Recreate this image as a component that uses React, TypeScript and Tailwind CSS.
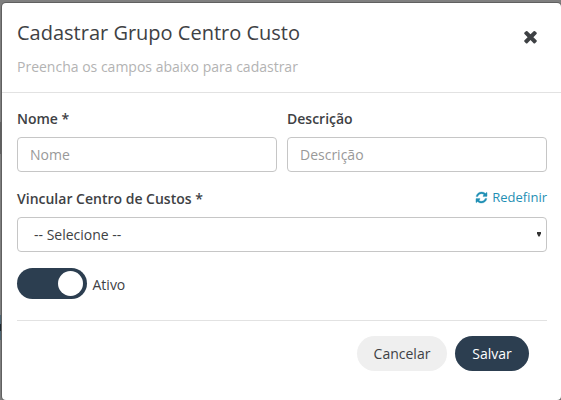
import { useState } from 'react';

const TimesIcon = () => (
  <svg viewBox="0 0 1792 1792" className="h-[19px] w-[19px]" fill="currentColor">
    <path d="M1490 1322q0 40-28 68l-136 136q-28 28-68 28t-68-28l-294-294-294 294q-28 28-68 28t-68-28l-136-136q-28-28-28-68t28-68l294-294-294-294q-28-28-28-68t28-68l136-136q28-28 68-28t68 28l294 294 294-294q28-28 68-28t68 28l136 136q28 28 28 68t-28 68l-294 294 294 294q28 28 28 68z" />
  </svg>
);

const RefreshIcon = () => (
  <svg viewBox="0 0 1792 1792" className="h-[13px] w-[13px]" fill="currentColor" stroke="currentColor" strokeWidth={40}>
    <path d="M1639 1056q0 5-1 7-64 268-268 434.5t-478 166.5q-146 0-282.5-55t-243.5-157l-129 129q-19 19-45 19t-45-19-19-45v-448q0-26 19-45t45-19h448q26 0 45 19t19 45-19 45l-137 137q71 66 161 102t187 36q134 0 250-65t186-179q11-17 53-117 8-23 30-23h192q13 0 22.5 9.5t9.5 22.5zm25-800v448q0 26-19 45t-45 19h-448q-26 0-45-19t-19-45 19-45l138-138q-148-137-349-137-134 0-250 65t-186 179q-11 17-53 117-8 23-30 23h-199q-13 0-22.5-9.5t-9.5-22.5v-7q65-268 270-434.5t480-166.5q146 0 284 55.5t245 156.5l130-129q19-19 45-19t45 19 19 45z" />
  </svg>
);

const inputClass =
  'mt-2 block h-[35px] w-full rounded border border-[#c6c6c6] bg-white px-3 text-sm text-[#3e4144] outline-none placeholder:text-[#999]';

export default function App() {
  const [ativo, setAtivo] = useState(true);

  return (
    <div className="relative h-[400px] w-[561px] overflow-hidden bg-[#7f7f7f] pt-[3px] pl-[2px] font-['Open_Sans','Noto_Sans',sans-serif] text-sm text-[#3e4144]">
      {/* Bordas da página que aparecem atrás do modal */}
      <div className="absolute top-[122px] left-0 h-8 w-[2px] bg-[#606060]" />
      <div className="absolute top-[315px] left-0 h-[25px] w-[2px] bg-[#4d6573]" />
      <div className="absolute top-[324px] left-0 h-[7px] w-px bg-[#1d2830]" />

      <div className="relative h-[397px] rounded bg-white shadow-[0_0_0_1px_#606060]">
        <header className="flex h-[90px] justify-between border-b border-[#e2e2e2] pl-[15px]">
          <div>
            <h1 className="mt-4 text-xl leading-7">Cadastrar Grupo Centro Custo</h1>
            <p className="mt-[10px] leading-5 text-[#b3b3b3]">Preencha os campos abaixo para cadastrar</p>
          </div>
          <button aria-label="Fechar" className="mt-6 mr-[21px] h-[19px]">
            <TimesIcon />
          </button>
        </header>

        <form className="pr-[14px] pl-[15px]" onSubmit={(e) => e.preventDefault()}>
          <div className="grid grid-cols-2 gap-[10px] pt-4">
            <div>
              <label className="block leading-5 font-semibold">Nome *</label>
              <input className={inputClass} placeholder="Nome" />
            </div>
            <div>
              <label className="block leading-5 font-semibold">Descrição</label>
              <input className={inputClass} placeholder="Descrição" />
            </div>
          </div>

          <div className="mt-[17px] flex h-5 items-center justify-between">
            <label className="leading-5 font-semibold">Vincular Centro de Custos *</label>
            <a className="-mt-[3px] flex items-center gap-1 text-[13px] text-[#1f8fb4]" href="#">
              <RefreshIcon />
              Redefinir
            </a>
          </div>
          <div className="mt-2 flex h-[35px] items-center justify-between rounded border border-[#c6c6c6] pr-[5px] pl-4">
            <span>-- Selecione --</span>
            <svg viewBox="0 0 4 5" className="mb-px h-[5px] w-1" fill="#333">
              <path d="M0 0h4v1.5L2.6 4.5H1.4L0 1.5z" />
            </svg>
          </div>

          <div className="mt-4 flex h-[31px] items-center">
            <button
              type="button"
              role="switch"
              aria-checked={ativo}
              onClick={() => setAtivo(!ativo)}
              className={`flex h-[31px] w-[70px] items-center rounded-full px-1 ${ativo ? 'justify-end bg-[#2c3e50]' : 'bg-[#ccc]'}`}
            >
              <span className="h-[25px] w-[25px] rounded-full bg-white" />
            </button>
            <span className="mt-[3px] ml-[5.5px]">Ativo</span>
          </div>

          <div className="mt-[21px] flex justify-end gap-2 border-t border-[#e2e2e2] pt-[15px] pr-[18px]">
            <button type="button" className="h-[35px] w-[90px] rounded-full bg-[#efefef]">Cancelar</button>
            <button type="submit" className="h-[35px] w-[74px] rounded-full bg-[#2c3e50] text-white">Salvar</button>
          </div>
        </form>
      </div>
    </div>
  );
}
